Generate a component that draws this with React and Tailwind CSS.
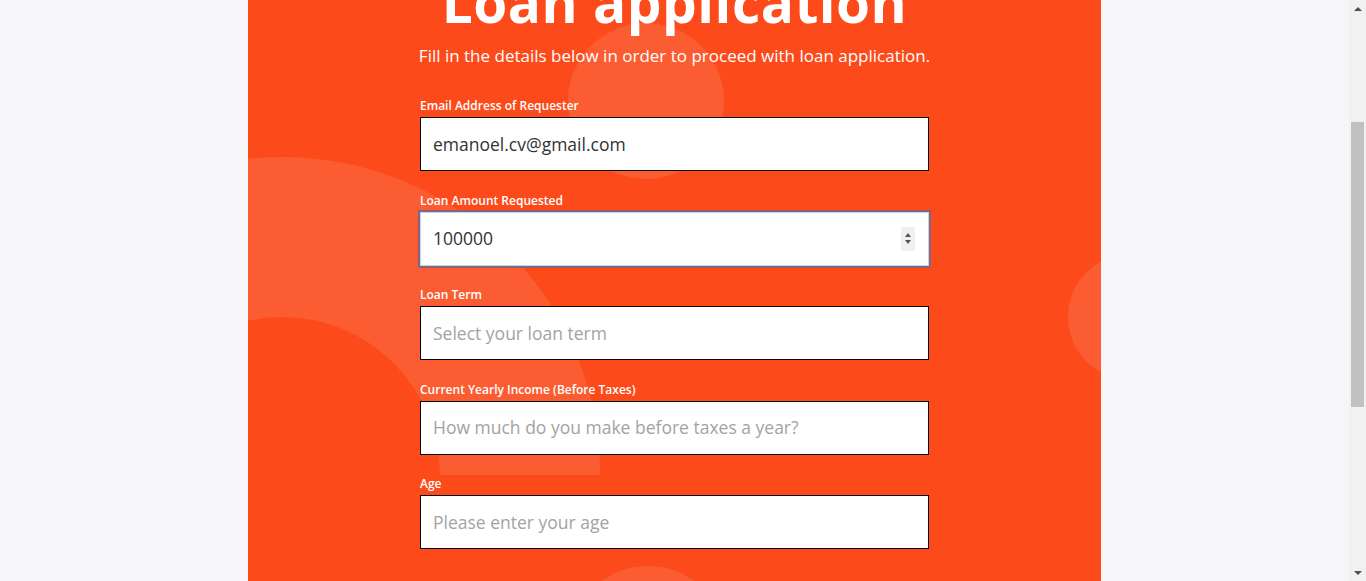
import React from "react";

const font = { fontFamily: '"Open Sans", "Liberation Sans", sans-serif' };

function Field({ label, children }) {
  return (
    <div className="flex flex-col gap-[3px]">
      <label className="text-[12px] leading-[16px] font-semibold text-white">{label}</label>
      {children}
    </div>
  );
}

function TextInput({ value, placeholder }) {
  return (
    <div className="h-[54px] w-[509px] bg-white border border-black flex items-center pl-[12px]">
      {value ? (
        <span className="text-[17.5px] text-[#333333]">{value}</span>
      ) : (
        <span className="text-[17.5px] text-[#a3a3a3]">{placeholder}</span>
      )}
    </div>
  );
}

function NumberInput({ value }) {
  return (
    <div className="h-[54px] w-[509px] bg-white border border-[#c4d4ea] outline-2 outline-[#87647e] flex items-center pl-[12px] pr-[13px]">
      <span className="text-[17.5px] text-[#333333] flex-1">{value}</span>
      <div className="w-[14px] h-[24px] bg-[#f0f0f0] flex flex-col items-center justify-center gap-[3px]">
        <span className="w-0 h-0 border-l-[3.5px] border-r-[3.5px] border-b-[4px] border-l-transparent border-r-transparent border-b-[#555]" />
        <span className="w-0 h-0 border-l-[3.5px] border-r-[3.5px] border-t-[4px] border-l-transparent border-r-transparent border-t-[#555]" />
      </div>
    </div>
  );
}

export default function App() {
  return (
    <div className="w-[1366px] h-[581px] overflow-hidden flex bg-[#f6f6fa]" style={font}>
      <div className="flex-1 flex justify-center">
        <div className="relative w-[853px] h-[581px] overflow-hidden bg-[#fc4a1a]">
          {/* decorative shapes */}
          <div className="absolute left-0 top-0 w-full h-[475px] overflow-hidden">
            <div className="absolute left-[-284px] top-[157px] w-[636px] h-[636px] rounded-full border-[160px] border-white/10" />
          </div>
          <div className="absolute left-[320px] top-[23px] w-[156px] h-[156px] rounded-full bg-white/10" />
          <div className="absolute left-[820px] top-[254px] w-[126px] h-[126px] rounded-full bg-white/10" />
          <div className="absolute left-[320px] top-[566px] w-[160px] h-[160px] rounded-full bg-white/10" />

          <div className="relative flex flex-col items-center">
            <h1 className="mt-[-26px] text-[55px] leading-[56px] font-bold text-white tracking-[0.5px]">
              Loan application
            </h1>
            <p className="mt-[14px] text-[17px] leading-[24px] text-white">
              Fill in the details below in order to proceed with loan application.
            </p>
            <div className="mt-[30px] flex flex-col gap-[21.5px]">
              <Field label="Email Address of Requester">
                <TextInput value="emanoel.cv@gmail.com" />
              </Field>
              <Field label="Loan Amount Requested">
                <NumberInput value="100000" />
              </Field>
              <Field label="Loan Term">
                <TextInput placeholder="Select your loan term" />
              </Field>
              <Field label="Current Yearly Income (Before Taxes)">
                <TextInput placeholder="How much do you make before taxes a year?" />
              </Field>
              <Field label="Age">
                <TextInput placeholder="Please enter your age" />
              </Field>
            </div>
          </div>
        </div>
      </div>
      {/* scrollbar */}
      <div className="w-[17px] h-full bg-[#f1f1f1] flex flex-col items-center">
        <div className="h-[17px] flex items-center justify-center">
          <span className="w-0 h-0 border-l-[4px] border-r-[4px] border-b-[4px] border-l-transparent border-r-transparent border-b-[#505050]" />
        </div>
        <div className="mt-[105px] w-[13px] h-[285px] bg-[#c1c1c1]" />
        <div className="flex-1" />
        <div className="h-[17px] flex items-center justify-center">
          <span className="w-0 h-0 border-l-[4px] border-r-[4px] border-t-[4px] border-l-transparent border-r-transparent border-t-[#505050]" />
        </div>
      </div>
    </div>
  );
}
